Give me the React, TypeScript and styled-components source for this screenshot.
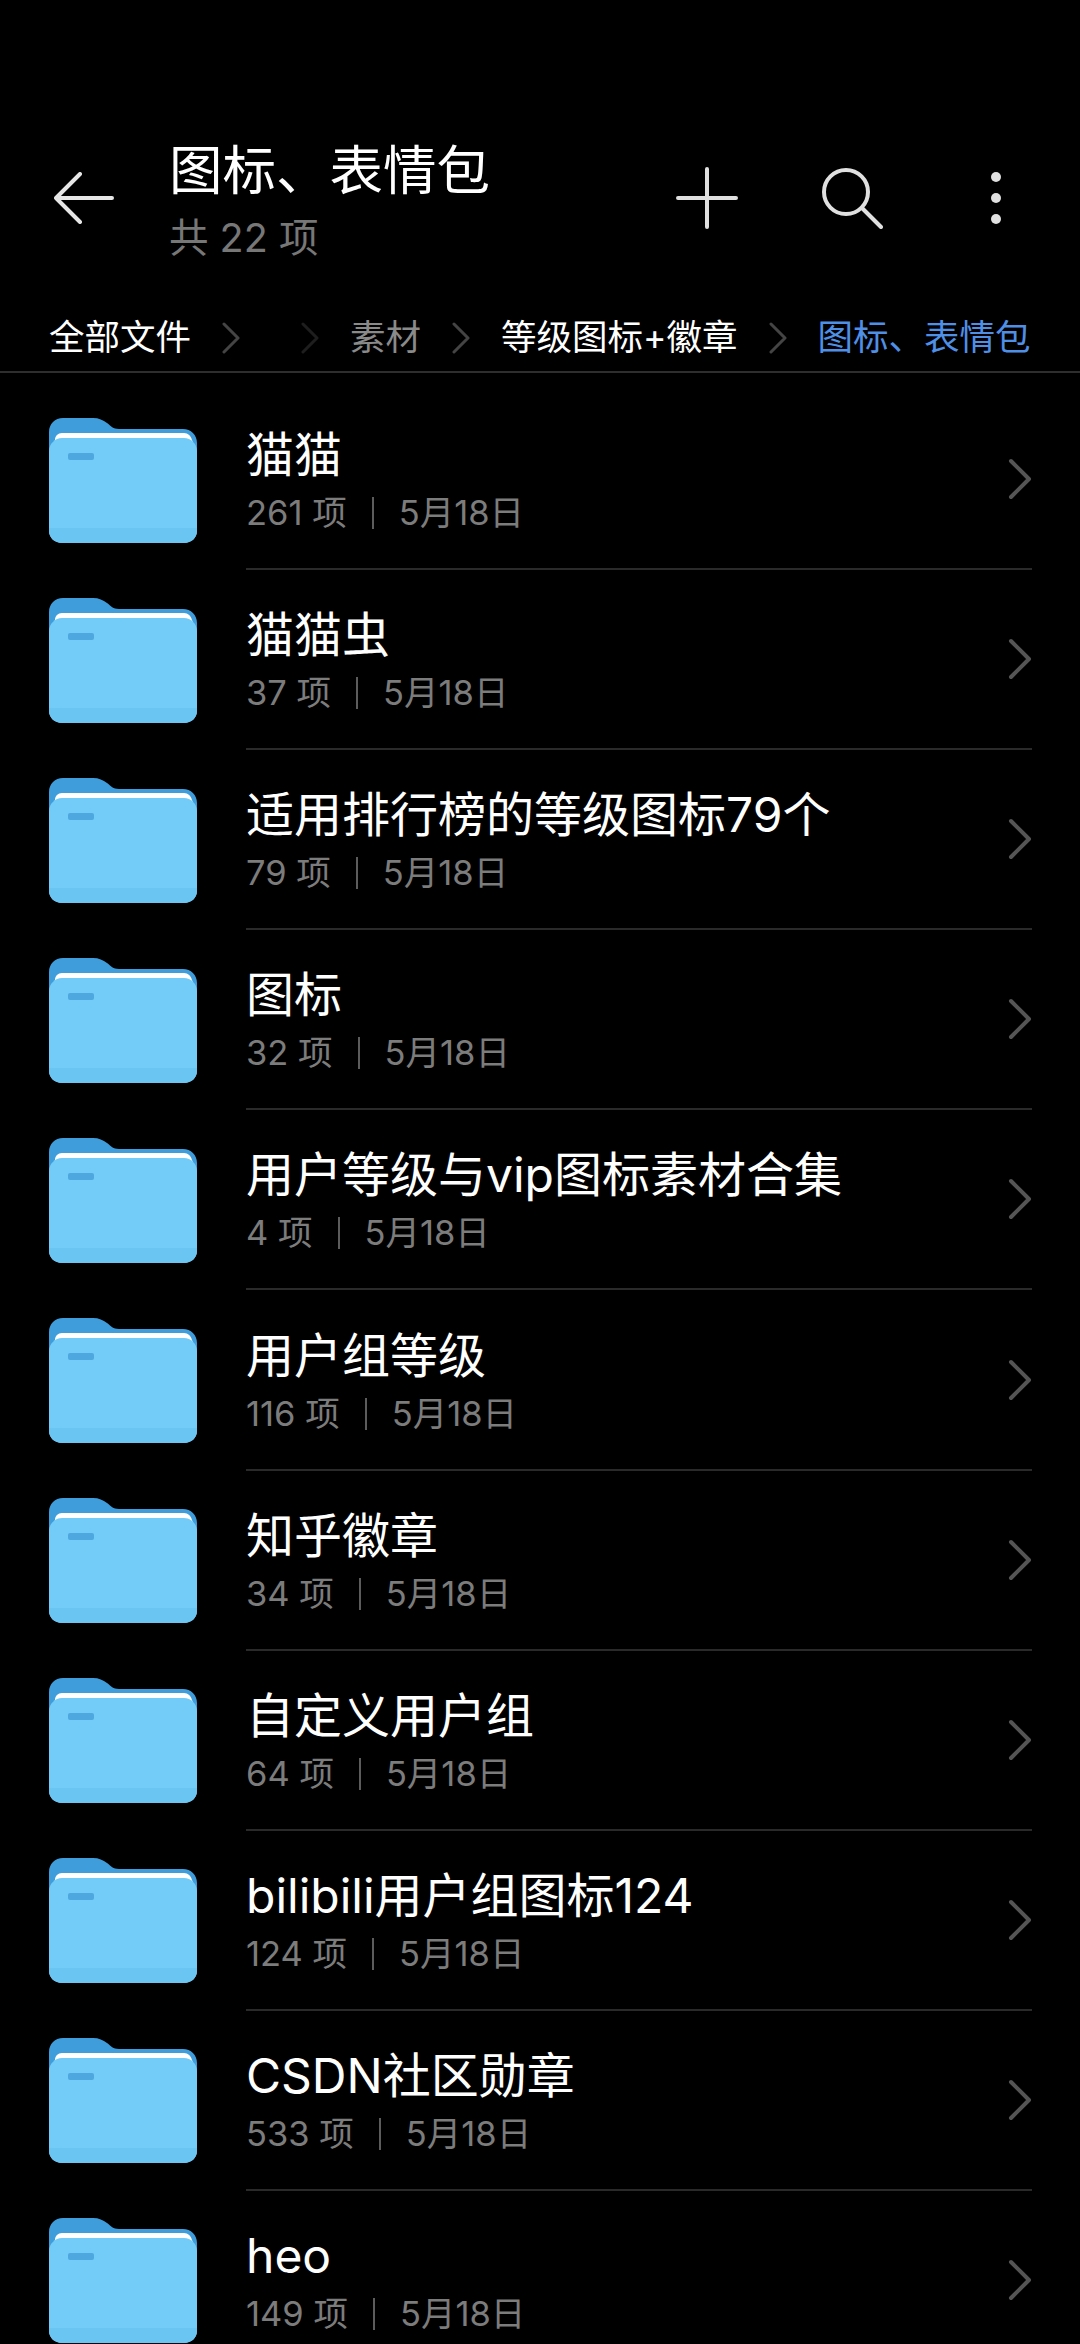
import React from "react";
import styled, { createGlobalStyle } from "styled-components";

const GlobalStyle = createGlobalStyle`
  html, body {
    margin: 0;
    padding: 0;
    background: #000;
  }
  body {
    font-family: Inter, "Noto Sans CJK SC", sans-serif;
  }
`;

const folders = [
  { name: "猫猫", count: 261 },
  { name: "猫猫虫", count: 37 },
  { name: "适用排行榜的等级图标79个", count: 79 },
  { name: "图标", count: 32 },
  { name: "用户等级与vip图标素材合集", count: 4 },
  { name: "用户组等级", count: 116 },
  { name: "知乎徽章", count: 34 },
  { name: "自定义用户组", count: 64 },
  { name: "bilibili用户组图标124", count: 124 },
  { name: "CSDN社区勋章", count: 533 },
  { name: "heo", count: 149 },
];

const BackIcon = () => (
  <svg width="60" height="52" viewBox="0 0 60 52" fill="none" stroke="#e6e6e6" strokeWidth="4" strokeLinecap="round" strokeLinejoin="round">
    <path d="M2 26H58M26 2L2 26L26 50" />
  </svg>
);

const PlusIcon = () => (
  <svg width="62" height="62" viewBox="0 0 62 62" fill="none" stroke="#e0e0e0" strokeWidth="4" strokeLinecap="round">
    <path d="M31 2V60M2 31H60" />
  </svg>
);

const SearchIcon = () => (
  <svg width="62" height="62" viewBox="0 0 62 62" fill="none" stroke="#e0e0e0" strokeWidth="4" strokeLinecap="round">
    <circle cx="25" cy="25" r="22" />
    <path d="M41 41L60 60" />
  </svg>
);

const MoreIcon = () => (
  <svg width="12" height="54" viewBox="0 0 12 54" fill="#e0e0e0">
    <circle cx="6" cy="6" r="5" />
    <circle cx="6" cy="27" r="5" />
    <circle cx="6" cy="48" r="5" />
  </svg>
);

const SmallChevron = () => (
  <svg width="18" height="34" viewBox="0 0 18 34" fill="none" stroke="currentColor" strokeWidth="3" strokeLinecap="round" strokeLinejoin="round">
    <path d="M2 3L16 17L2 31" />
  </svg>
);

const RowChevron = () => (
  <svg width="24" height="44" viewBox="0 0 24 44" fill="none" stroke="#555" strokeWidth="4" strokeLinecap="round" strokeLinejoin="round">
    <path d="M3 4L21 22L3 40" />
  </svg>
);

const FolderIcon = () => (
  <svg width="148" height="125" viewBox="0 0 148 125">
    <path d="M0 14C0 6 6 0 14 0H44C50 0 54 2 58 5C62 8 64 11 70 11H134C142 11 148 17 148 25V60H0Z" fill="#3f9ddb" />
    <path d="M6 22C6 18 9 15 13 15H135C139 15 142 18 143 22L146 30H2Z" fill="#fff" />
    <path d="M0 33C0 26 6 20 13 20H135C142 20 148 26 148 33V113C148 120 142 125 135 125H13C6 125 0 120 0 113Z" fill="#73ccf8" />
    <path d="M0 110H148V113C148 120 142 125 135 125H13C6 125 0 120 0 113Z" fill="#6bc5f2" />
    <rect x="19" y="35" width="26" height="7" rx="2" fill="#4fa7e0" />
  </svg>
);

const App = () => (
  <Page>
    <GlobalStyle />
    <Header>
      <BackIcon />
      <TitleBlock>
        <Title>图标、表情包</Title>
        <Subtitle>共 22 项</Subtitle>
      </TitleBlock>
      <Actions>
        <PlusIcon />
        <SearchIcon />
        <MoreSlot>
          <MoreIcon />
        </MoreSlot>
      </Actions>
    </Header>
    <Breadcrumbs>
      <Crumb>全部文件</Crumb>
      <Separator $tone="#444">
        <SmallChevron />
      </Separator>
      <EmptyCrumb />
      <Separator $tone="#1e1e1e">
        <SmallChevron />
      </Separator>
      <Crumb $tone="#8a8a8a">素材</Crumb>
      <Separator $tone="#444">
        <SmallChevron />
      </Separator>
      <Crumb>等级图标+徽章</Crumb>
      <Separator $tone="#444">
        <SmallChevron />
      </Separator>
      <Crumb $tone="#4f8fe6">图标、表情包</Crumb>
    </Breadcrumbs>
    <List>
      {folders.map((folder) => (
        <Row key={folder.name}>
          <FolderIcon />
          <RowBody>
            <RowText>
              <RowName>{folder.name}</RowName>
              <RowMeta>
                <span>{folder.count} 项</span>
                <MetaBar />
                <span>5月18日</span>
              </RowMeta>
            </RowText>
            <RowChevron />
          </RowBody>
        </Row>
      ))}
    </List>
  </Page>
);

export default App;

const Page = styled.div`
  width: 1080px;
  height: 2344px;
  overflow: hidden;
  background: #000;
  color: #fff;
`;

const Header = styled.header`
  display: flex;
  align-items: center;
  height: 136px;
  margin-top: 130px;
  padding: 0 78px 0 54px;
`;

const TitleBlock = styled.div`
  flex: 1;
  margin-left: 55px;
  padding-top: 2px;
`;

const Title = styled.h1`
  margin: 0;
  font-size: 53.5px;
  line-height: 74px;
  font-weight: 400;
  color: #fff;
`;

const Subtitle = styled.div`
  margin-top: 3px;
  font-size: 39.5px;
  line-height: 54px;
  color: #777;
`;

const Actions = styled.div`
  display: flex;
  align-items: center;
  gap: 83px;
`;

const MoreSlot = styled.div`
  display: flex;
  margin-left: 24px;
`;

const Breadcrumbs = styled.nav`
  display: flex;
  align-items: center;
  height: 107px;
  padding: 38px 0 0 49px;
  border-bottom: 2px solid #2e2e2e;
  box-sizing: border-box;
  white-space: nowrap;
`;

const Crumb = styled.span<{ $tone?: string }>`
  font-size: 35.5px;
  line-height: 48px;
  color: ${(p) => p.$tone ?? "#fff"};
`;

const EmptyCrumb = styled.span`
  width: 30px;
`;

const Separator = styled.span<{ $tone: string }>`
  display: flex;
  margin: 0 31px;
  color: ${(p) => p.$tone};

  ${EmptyCrumb} + & {
    margin-left: 0;
  }
`;

const List = styled.main`
  padding-top: 17px;
`;

const Row = styled.div`
  display: flex;
  align-items: center;
  height: 180.1px;
  padding-left: 49px;
`;

const RowBody = styled.div`
  flex: 1;
  align-self: stretch;
  display: flex;
  align-items: center;
  justify-content: space-between;
  margin-left: 49px;
  margin-right: 48px;
  border-bottom: 2px solid #2a2a2a;
  box-sizing: border-box;
`;

const RowText = styled.div`
  display: flex;
  flex-direction: column;
  gap: 2px;
  padding-top: 4px;
`;

const RowName = styled.div`
  font-size: 48px;
  line-height: 62px;
  color: #fff;
`;

const RowMeta = styled.div`
  display: flex;
  align-items: center;
  font-size: 34.5px;
  line-height: 50px;
  color: #7c7c7c;
`;

const MetaBar = styled.i`
  width: 2px;
  height: 32px;
  margin: 0 25px;
  background: #5c5c5c;
`;
